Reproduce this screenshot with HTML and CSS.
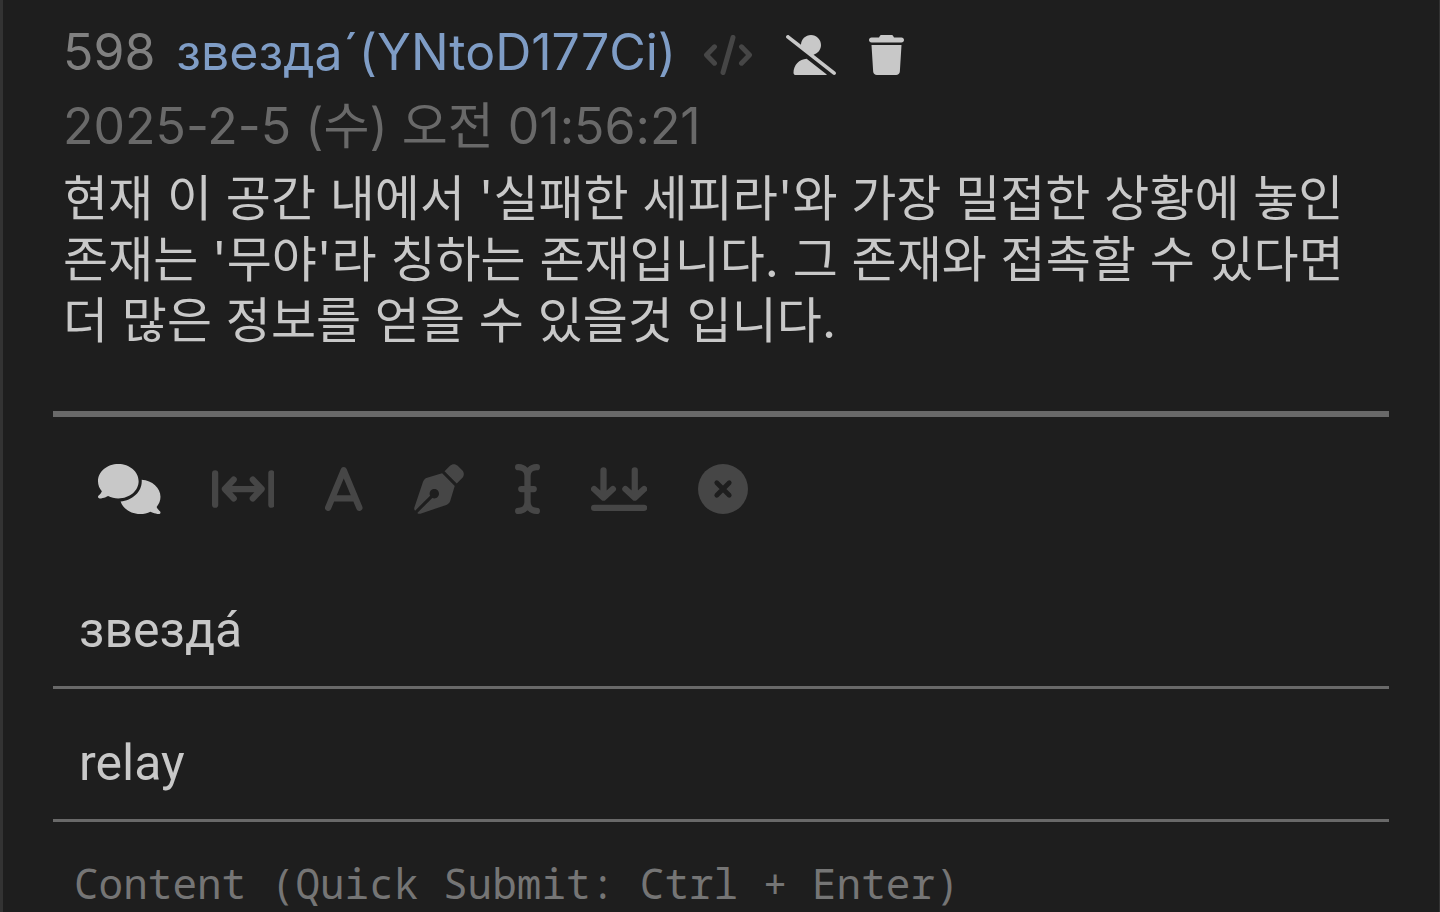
FILE: index.html
```html
<!DOCTYPE html>
<html lang="ko">
<head>
<meta charset="utf-8">
<meta name="viewport" content="width=device-width, initial-scale=1">
<title>звезда</title>
<link rel="stylesheet" href="styles.css">
</head>
<body>
<main class="thread">
  <article class="post">
    <header class="post-header">
      <span class="post-number">598</span>
      <span class="post-author">звезда´(YNtoD177Ci)</span>
      <div class="post-actions">
        <button class="icon-button dim" type="button" aria-label="Code">
          <svg class="icon-small stroke" viewBox="0 0 640 512"><path d="M384 32L256 480M147 151L45 256L147 361M493 151L595 256L493 361"/></svg>
        </button>
        <button class="icon-button" type="button" aria-label="Block user">
          <svg class="icon-small" viewBox="0 0 640 512"><path d="M38.8 5.1C28.4-3.1 13.3-1.2 5.1 9.2S-1.2 34.7 9.2 42.9l592 464c10.4 8.2 25.5 6.3 33.7-4.1s6.3-25.5-4.1-33.7L353.3 251.6C407.9 237 448 187.2 448 128C448 57.3 390.7 0 320 0C250.2 0 193.5 55.8 192 125.2L38.8 5.1zM264.3 304.3C170.5 309.4 96 387.2 96 482.3c0 16.4 13.3 29.7 29.7 29.7H514.3c3.9 0 7.6-.7 11-2.1l-261-205.6z"/></svg>
        </button>
        <button class="icon-button" type="button" aria-label="Delete">
          <svg class="icon-small" viewBox="0 0 448 512"><path d="M135.2 17.7L128 32H32C14.3 32 0 46.3 0 64S14.3 96 32 96H416c17.7 0 32-14.3 32-32s-14.3-32-32-32H320l-7.2-14.3C307.4 6.8 296.3 0 284.2 0H163.8c-12.1 0-23.2 6.8-28.6 17.7zM416 128H32L53.2 467c1.6 25.3 22.6 45 47.9 45H346.9c25.3 0 46.3-19.7 47.9-45L416 128z"/></svg>
        </button>
      </div>
    </header>
    <time class="post-date" datetime="2025-02-05T01:56:21">2025-2-5 (수) 오전 01:56:21</time>
    <p class="post-body">현재 이 공간 내에서 '실패한 세피라'와 가장 밀접한 상황에 놓인 존재는 '무야'라 칭하는 존재입니다. 그 존재와 접촉할 수 있다면 더 많은 정보를 얻을 수 있을것 입니다.</p>
  </article>
  <form class="reply">
    <div class="toolbar">
      <button class="icon-button" type="button" aria-label="Comments">
        <svg class="icon" viewBox="0 0 640 512"><path d="M208 352c114.9 0 208-78.8 208-176S322.9 0 208 0S0 78.8 0 176c0 38.6 14.7 74.3 39.6 103.4c-3.5 9.4-8.7 17.7-14.2 24.7c-4.8 6.2-9.7 11-13.3 14.3c-1.8 1.6-3.3 2.9-4.3 3.7c-.5 .4-.9 .7-1.1 .8l-.2 .2C1 327.2-1.4 334.4 .8 340.9S9.1 352 16 352c21.8 0 43.8-5.6 62.1-12.5c9.2-3.5 17.8-7.4 25.2-11.4C134.1 343.3 169.8 352 208 352zM448 176c0 112.3-99.1 196.9-216.5 207C255.8 457.4 336.4 512 432 512c38.2 0 73.9-8.7 104.7-23.9c7.5 4 16 7.9 25.2 11.4c18.3 6.9 40.3 12.5 62.1 12.5c6.9 0 13.1-4.5 15.2-11.1c2.1-6.6-.2-13.8-5.8-17.9l-.2-.2c-.2-.2-.6-.4-1.1-.8c-1-.8-2.5-2-4.3-3.7c-3.6-3.3-8.5-8.1-13.3-14.3c-5.5-7-10.7-15.4-14.2-24.7c24.9-29 39.6-64.7 39.6-103.4c0-92.8-84.9-168.9-192.6-175.5c.4 5.1 .6 10.3 .6 15.5z"/></svg>
      </button>
      <button class="icon-button dim" type="button" aria-label="Full width">
        <svg class="icon stroke" viewBox="0 0 640 512"><path d="M32 96V416M608 96V416M141 256H499M222 160L132 256L222 352M418 160L508 256L418 352"/></svg>
      </button>
      <button class="icon-button dim" type="button" aria-label="Font">
        <svg class="icon stroke" viewBox="0 0 384 512"><path d="M32 448L192 64L352 448M80 352H304"/></svg>
      </button>
      <button class="icon-button dim" type="button" aria-label="Draw">
        <svg class="icon" viewBox="0 0 512 512"><path d="M368.4 18.3L312.7 74.1 437.9 199.3l55.7-55.7c21.9-21.9 21.9-57.3 0-79.2L447.6 18.3c-21.9-21.9-57.3-21.9-79.2 0zM288 94.6l-9.2 2.8L134.7 140.6c-19.9 6-35.7 21.2-42.3 41L3.8 445.8c-3.8 11.3-1 23.9 7.3 32.4L164.7 324.7c-3-6.3-4.7-13.3-4.7-20.7c0-26.5 21.5-48 48-48s48 21.5 48 48s-21.5 48-48 48c-7.4 0-14.4-1.7-20.7-4.7L33.7 500.9c8.6 8.3 21.1 11.2 32.4 7.3l264.3-88.6c19.7-6.6 35-22.4 41-42.3l43.2-144.1 2.8-9.2L288 94.6z"/></svg>
      </button>
      <button class="icon-button dim" type="button" aria-label="Insert text">
        <svg class="icon stroke" viewBox="0 0 256 512"><path d="M32 32H38C90 34 128 70 128 122V390C128 442 90 478 38 480H32M224 32H218C166 34 128 70 128 122M128 390C128 442 166 478 218 480H224M64 256H192"/></svg>
      </button>
      <button class="icon-button dim" type="button" aria-label="Scroll to bottom">
        <svg class="icon stroke" viewBox="0 0 576 512"><path d="M32 448H544M128 64V340M32 256L128 344L224 256M448 64V340M352 256L448 344L544 256"/></svg>
      </button>
      <button class="icon-button dim" type="button" aria-label="Close">
        <svg class="icon" viewBox="0 0 512 512"><circle cx="256" cy="256" r="256"/><path class="cross" d="M192 192L320 320M320 192L192 320"/></svg>
      </button>
    </div>
    <input class="field" type="text" aria-label="Name" value="звезда́">
    <input class="field" type="text" aria-label="Console" value="relay">
    <textarea class="content" rows="1" aria-label="Content" placeholder="Content (Quick Submit: Ctrl + Enter)"></textarea>
  </form>
</main>
</body>
</html>
```
FILE: styles.css
```css
* {
  box-sizing: border-box;
}

body {
  margin: 0;
  background: #1e1e1e;
  color: #c8c8c8;
  font-family: Inter, "Noto Sans CJK KR", sans-serif;
}

.thread {
  display: flex;
  flex-direction: column;
  min-height: 100vh;
  padding: 16px 50px 0;
  border-left: 3px solid #333;
  border-right: 1px solid #333;
}

.post {
  padding: 0 10px 60px;
}

.post-header {
  display: flex;
  align-items: center;
  font-size: 50px;
  line-height: 73px;
}

.post-number {
  margin-right: 21px;
  color: #808080;
}

.post-author {
  color: #7f9dc6;
}

.post-actions {
  display: flex;
  align-items: center;
  gap: 33px;
  margin-left: 27px;
  padding-top: 5px;
}

.icon-button {
  display: flex;
  padding: 0;
  border: 0;
  background: none;
  color: #c8c8c8;
  cursor: pointer;
}

.dim {
  color: #464646;
}

.icon {
  height: 50px;
  fill: currentColor;
}

.icon-small {
  height: 40px;
  fill: currentColor;
}

.stroke {
  fill: none;
  stroke: currentColor;
  stroke-width: 64;
  stroke-linecap: round;
  stroke-linejoin: round;
}

.cross {
  stroke: #1e1e1e;
  stroke-width: 48;
  stroke-linecap: round;
}

.post-date {
  display: block;
  color: #696969;
  font-size: 50px;
  line-height: 75px;
}

.post-body {
  margin: 4px 0 0;
  font-size: 49px;
  line-height: 61px;
  word-break: keep-all;
}

.reply {
  display: flex;
  flex: 1;
  flex-direction: column;
  border-top: 6px solid #696969;
}

.toolbar {
  display: flex;
  gap: 51px;
  padding: 47px 45px 42px;
}

.field {
  width: 100%;
  height: 133px;
  padding: 44px 26px 26px;
  border: 0;
  border-bottom: 3px solid #696969;
  background: none;
  color: #c8c8c8;
  font-family: Roboto, sans-serif;
  font-size: 50px;
  line-height: 60px;
  outline: 0;
}

.content {
  flex: 1;
  width: 100%;
  padding: 36px 21px 0;
  border: 0;
  background: none;
  color: #c8c8c8;
  font-family: "Noto Sans Mono", "DejaVu Sans Mono", monospace;
  font-size: 41px;
  line-height: 50px;
  outline: 0;
  resize: none;
}

.content::placeholder {
  color: #757575;
}
```
